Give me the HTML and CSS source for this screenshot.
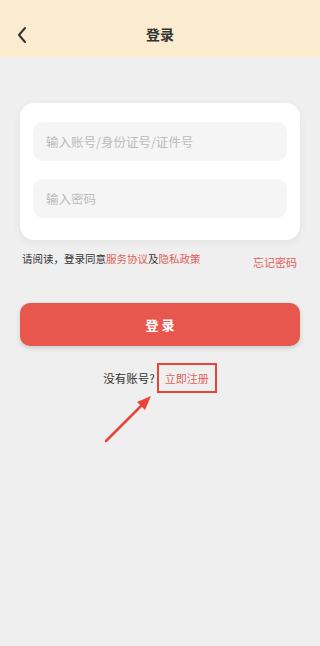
FILE: index.html
```html
<!DOCTYPE html>
<html lang="zh-CN">
<head>
    <meta charset="UTF-8">
    <title>登录</title>
    <link rel="stylesheet" href="styles.css">
</head>
<body>
    <div class="header">
        <svg class="back" width="12" height="18" viewBox="0 0 12 18">
            <path d="M9 2 L3 9 L9 16" fill="none" stroke="#333" stroke-width="2" stroke-linecap="round" stroke-linejoin="round"/>
        </svg>
        <h1 class="title">登录</h1>
    </div>

    <div class="main">
        <div class="card">
            <div class="field">输入账号/身份证号/证件号</div>
            <div class="field">输入密码</div>
        </div>

        <div class="agree-row">
            <span class="agree">请阅读，登录同意<a>服务协议</a>及<a>隐私政策</a></span>
            <a class="forget">忘记密码</a>
        </div>

        <button class="login-btn">登 录</button>

        <div class="register">
            没有账号?<span class="reg-box"><a>立即注册</a></span>
        </div>
    </div>

    <!-- 标注箭头 -->
    <svg class="arrow" width="60" height="60" viewBox="0 0 60 60">
        <line x1="6" y1="50" x2="44" y2="12" stroke="#e8443a" stroke-width="2.5" stroke-linecap="round"/>
        <polygon points="51,5 37,11 45,19" fill="#e8443a"/>
    </svg>
</body>
</html>
```

FILE: styles.css
```css
body {
    margin: 0;
    width: 320px;
    height: 646px;
    background: #efefef;
    font-family: "Noto Sans CJK SC", "Noto Sans", sans-serif;
    position: relative;
    overflow: hidden;
}

a {
    color: #e0605a;
    text-decoration: none;
}

/* 顶栏 */
.header {
    height: 57px;
    background: #fbebcf;
    display: flex;
    align-items: center;
    justify-content: center;
    position: relative;
}

    .header .back {
        position: absolute;
        left: 16px;
        top: 26px;
    }

    .header .title {
        margin: 0;
        padding-top: 11px;
        font-size: 14px;
        font-weight: bold;
        color: #333;
    }

.main {
    padding: 46px 20px 0;
}

/* 输入卡片 */
.card {
    background: #fff;
    border-radius: 14px;
    box-shadow: 0 2px 8px rgba(0,0,0,0.06);
    padding: 19px 13px 22px;
    display: flex;
    flex-direction: column;
    gap: 18px;
}

.field {
    height: 39px;
    background: #f5f5f5;
    border-radius: 10px;
    padding-left: 13px;
    display: flex;
    align-items: center;
    font-size: 12.5px;
    color: #bbb;
}

.agree-row {
    display: flex;
    justify-content: space-between;
    align-items: center;
    margin-top: 6px;
    padding: 0 3px 0 2px;
}

.agree {
    font-size: 10.5px;
    color: #333;
}

.forget {
    font-size: 11px;
    padding-top: 8px;
}

/* 登录按钮 */
.login-btn {
    display: block;
    width: 280px;
    height: 43px;
    margin-top: 33px;
    border: none;
    border-radius: 10px;
    background: #e8574e;
    color: #fff;
    font-family: inherit;
    font-size: 13px;
    font-weight: bold;
    box-shadow: 0 2px 5px rgba(0,0,0,0.15);
}

.register {
    display: flex;
    justify-content: center;
    align-items: center;
    margin-top: 17px;
    font-size: 11.5px;
    color: #333;
}

.reg-box {
    margin-left: 2px;
    border: 2px solid #e8443a;
    padding: 5px 6px;
    font-size: 11px;
}

.arrow {
    position: absolute;
    left: 100px;
    top: 391px;
}
```
